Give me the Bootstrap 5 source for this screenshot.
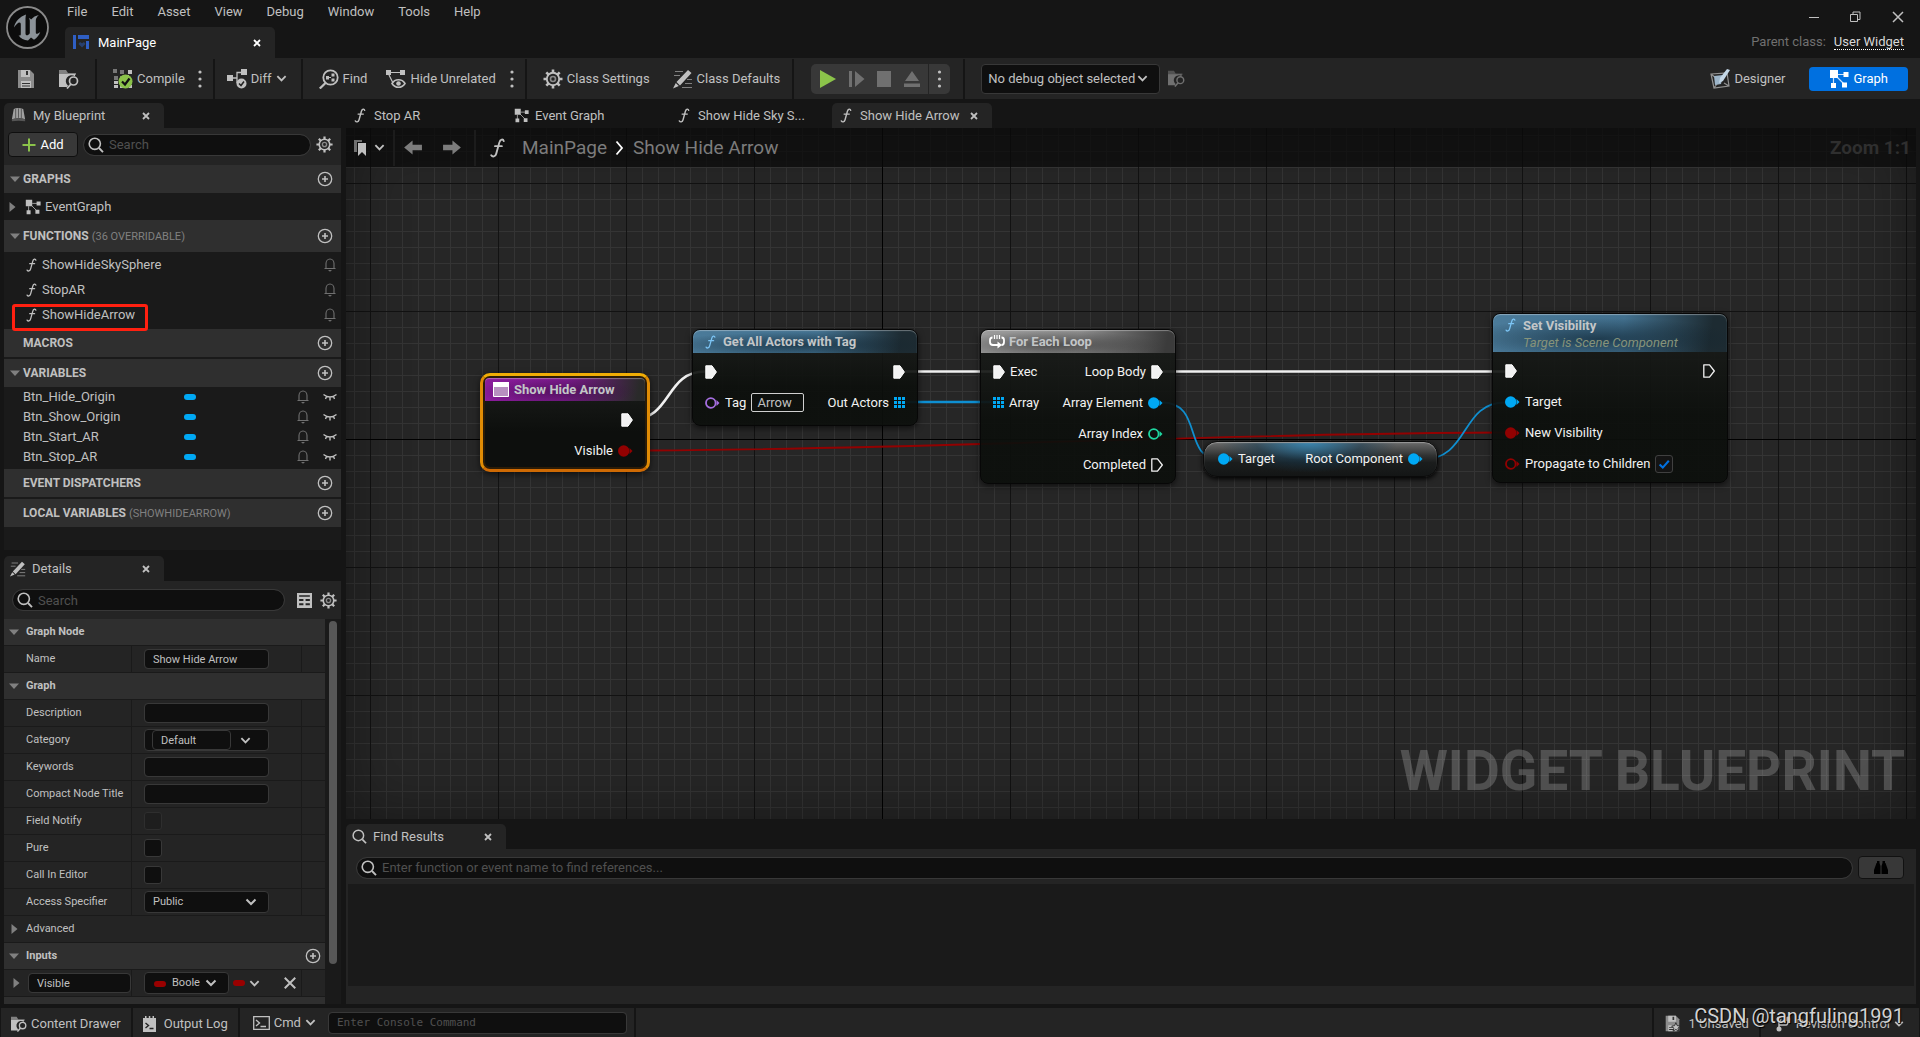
<!DOCTYPE html>
<html lang="en">
<head>
<meta charset="utf-8">
<meta name="viewport" content="width=device-width, initial-scale=1">
<title>MainPage</title>
<link href="https://cdn.jsdelivr.net/npm/bootstrap@5.3.0/dist/css/bootstrap.min.css" rel="stylesheet">
<style>
:root{--ink:#c0c0c0;--panel:#242424;--deep:#151515;--head:#2f2f2f;--list:#1a1a1a;--field:#0f0f0f;--line:#383838}
body{background:var(--deep);color:var(--ink);font:13px/16px Roboto,"Liberation Sans",sans-serif;overflow:hidden}
svg{display:block;flex:none;fill:currentColor}
.ln{fill:none;stroke:currentColor}
a{color:inherit;text-decoration:none}
.ui-btn{background:none;border:0;padding:0;color:inherit;font-size:13px;line-height:16px;display:flex;align-items:center;gap:4px;white-space:nowrap;border-radius:4px}
.dim{color:#707070}
.green{color:#8bc34a}
.blue{color:#2f5fc4}
.pin-obj{color:#00a8f4}
.pin-bool{color:#920101}
.pin-name{color:#a56ee0}
.pin-int{color:#1fd6a0}
.fn-blue{color:#7cc4f4}
.logo-box{width:65px;padding:6px}
.menu-row{height:23px;gap:24px;padding-left:2px}
.app-tab{width:210px;height:31px;background:var(--panel);border-radius:5px 5px 0 0;padding:0 14px 0 8px;color:#fff;gap:8px}
.win-row{height:34px;gap:31px}
.dotted{color:#d8d8d8;border-bottom:1px dotted #fff;line-height:15px}
.tool-row{background:var(--panel);height:42px}
.tool-group{border-right:2px solid var(--deep);height:40px;display:flex;align-items:center}
.play-group{background:#383838;border-radius:5px;height:30px}
.play-more{border-left:1px solid #242424!important;border-radius:0}
.field{background-color:var(--field);border:1px solid var(--line);border-radius:4px;color:var(--ink);font-size:13px;line-height:16px;padding:0 8px}
.field::placeholder{color:#505050;opacity:1}
.field:focus{background-color:var(--field);color:#fff;border-color:#0070e0;box-shadow:none}
.form-select.field{background-image:url("data:image/svg+xml,%3Csvg xmlns='http://www.w3.org/2000/svg' viewBox='0 0 12 12'%3E%3Cpath fill='none' stroke='%23c0c0c0' stroke-width='2' d='M1.500 3.500 6 8l4.500-4.500'/%3E%3C/svg%3E");background-size:12px;background-position:right 11px center;background-repeat:no-repeat}
.form-select.debug-pick{width:179px;height:30px;padding:0 22px 0 6px;background-size:11px}
.mode-btn{height:24px;padding:0 20px;border-radius:4px}
.mode-on{background:#0070e0;color:#fff}
.side{width:337px}
.dock-tab{width:160px;height:25px;border-radius:5px 5px 0 0;padding:0 14px 0 6px;gap:6px}
.dock-on{background:var(--panel)}
.fn-tab{padding-left:8px;gap:8px}
.pill{position:relative}
.pill svg{position:absolute;left:5px;top:3px}
.pill .field{height:22px;border-radius:11px;padding-left:25px}
.add-btn{background:#383838;border:1px solid #0f0f0f;width:70px;height:25px;justify-content:center;color:#fff}
.bp-tools{height:37px;padding:0 8px 4px 4px;gap:5px}
.dt-tools{height:38px;padding:0 4px 0 8px;gap:8px}
.sec{height:28px;background:var(--head);padding:0 8px 0 6px;gap:3px;font-size:12px;font-weight:700}
.sec small{font-size:11px;font-weight:400;color:#808080}
.sec-tall{height:32px}
.sec-gap{margin-top:2px}
.twist{width:10px}
.bp{background:var(--list);padding-bottom:23px}
.ev-row{height:27px;padding-left:3px}
.fn-row{height:25px;padding:0 5px 0 22px;gap:5px}
.var-row{height:20px;padding:0 4px 0 19px;gap:14px}
.capsule{width:12px;height:6px;border-radius:3px;background:#00a8f4}
.var-name{width:147px}
.mark-box{left:8px;top:2px;width:136px;height:27px;border:3px solid #ff2010;border-radius:3px;z-index:2}
.prop{height:27px;border-bottom:1px solid var(--list);font-size:11px;line-height:14px;background:var(--panel)}
.prop-head{background:var(--head);font-weight:700;padding:0 4px 0 5px;gap:7px}
.prop-name{width:128px;padding-left:22px;border-right:1px solid var(--list);align-self:stretch;display:flex;align-items:center;margin:0;white-space:nowrap}
.prop-val{flex:1;padding-left:12px;border-right:1px solid var(--list);align-self:stretch;display:flex;align-items:center}
.prop-end{width:23px}
.prop .field{width:125px;height:20px;font-size:11px;line-height:14px;min-height:0}
.prop .combo{width:79px}
.prop select.field{height:22px}
.prop .boole{width:85px;height:24px;padding-left:27px;padding-right:28px}
.prop .in-name{width:103px}
.combo-wrap{width:125px;height:22px;background:var(--field);border:1px solid var(--line);border-radius:4px;padding:0 17px 0 7px}
.tick{width:18px;height:18px;margin:0!important;background-color:var(--field);border:1px solid var(--line);border-radius:3px!important}
.tick:disabled{background-color:var(--list)}
.tick:checked{background-color:#141414;border-color:#404040;background-image:url("data:image/svg+xml,%3Csvg xmlns='http://www.w3.org/2000/svg' viewBox='0 0 20 20'%3E%3Cpath fill='none' stroke='%230070e0' stroke-width='2.600' d='m4.500 10.500 4 4 7.500-8.500'/%3E%3C/svg%3E")}
.red-pill{width:12px;height:6px;border-radius:3px;background:#990000}
.on-select{left:10px;top:9px}
.bar-track{width:16px;background:var(--list);padding:2px 4px}
.bar-thumb{width:8px;height:343px;border-radius:4px;background:#575757}
.canvas{background-color:#262626;
 background-image:
 linear-gradient(#000,#000),linear-gradient(#000,#000),
 linear-gradient(90deg,#121212 1px,transparent 1px),linear-gradient(#121212 1px,transparent 1px),
 linear-gradient(90deg,#343434 1px,transparent 1px),linear-gradient(#343434 1px,transparent 1px);
 background-size:1px 100%,100% 1px,128px 128px,128px 128px,16px 16px,16px 16px;
 background-position:536px 0,0 311px,24px 0,0 55px,8px 0,0 7px;
 background-repeat:no-repeat,no-repeat,repeat,repeat,repeat,repeat}
.canvas::before{content:"";position:absolute;inset:0;box-shadow:inset 0 0 60px rgba(0,0,0,.42)}
.crumbs{height:39px;background:rgba(10,10,10,.72);font-size:19px;line-height:24px;color:#7c7c7c;padding-left:8px}
.crumb-sep{width:2px;height:36px;background:#1c1c1c}
.zoom-tag{color:#2f2f2f;font-weight:700;padding-right:5px}
.stamp{right:11px;bottom:16px;font-size:55px;line-height:64px;font-weight:700;color:rgba(255,255,255,.2)}
.node{position:absolute;border:1px solid #070707;border-radius:8px;background:linear-gradient(rgba(28,30,28,.92),rgba(12,15,12,.93) 60%);box-shadow:0 2px 6px rgba(0,0,0,.6);color:#f2f2f2;padding-bottom:3px}
.node-head{height:23px;border-radius:7px 7px 0 0;font-weight:700;color:#c3c6c8;padding:0 12px;gap:7px;margin-bottom:3px;box-shadow:inset 0 1px 1px rgba(255,255,255,.35)}
.node-head.tight{padding-left:8px;gap:4px}
.node-row{height:31px;padding:0 12px;gap:5px}
.head-blue{background:radial-gradient(ellipse 60% 55% at 45% 65%,rgba(12,32,45,.65),transparent),linear-gradient(100deg,#4b7b9a,#42708e 55%,#1d2b32 92%)}
.head-gray{background:radial-gradient(ellipse 55% 60% at 38% 65%,rgba(50,50,50,.7),transparent),linear-gradient(100deg,#9a9a9a,#8d8d8d 50%,#3b3b3b 95%)}
.head-purple{background:radial-gradient(ellipse 50% 60% at 45% 60%,rgba(60,10,70,.6),transparent),linear-gradient(100deg,#8a1c9c,#7b1b8c 50%,#2a2a2a 95%);border-radius:4px 4px 0 0}
.head-two{height:38px;padding-top:4px}
.head-two em{font-weight:400;color:#86937a;display:block;line-height:17px}
.n-entry{left:134px;top:245px;width:170px;border:3px solid;border-color:#f0ad05 #e08c05 #cf6a04;border-radius:10px;padding:2px;background:#2c1c06}
.n-entry .node-body{background:linear-gradient(#1c1e1c,#0d0f0d 60%);border-radius:5px;padding-bottom:1px}
.n-tag{left:346px;top:201px;width:226px}
.n-loop{left:634px;top:201px;width:196px}
.n-root{left:857px;top:313px;width:235px;height:36px;border-radius:14px;border-color:#0a0a0a;padding:0 2px;box-shadow:inset 0 1px 1px #9a9a9a,0 2px 5px #000;background:radial-gradient(ellipse 38% 90% at 45% 0,rgba(50,140,190,.85),rgba(20,60,85,.5) 60%,transparent),linear-gradient(#6c6c6c,#303232 40%,#1b1d1d 60%,#141616)}
.n-set{left:1146px;top:185px;width:236px}
.tag-in{background:transparent;border:1px solid #d0d0d0;border-radius:2px;color:var(--ink);width:53px;height:19px;padding:0 5px;font-size:13px;line-height:16px}
.find-box{background:var(--panel);padding:7px 2px 18px}
.find-list{background:var(--list);height:102px;margin-top:5px}
.bino{width:46px;height:23px;background:#383838;border:1px solid #111;justify-content:center;color:#000}
.status{margin-top:4px;height:29px;gap:2px;padding:0 1px}
.status>.cell{background:var(--panel);display:flex;align-items:center;padding:2px 10px 0}
.mono{font-family:"DejaVu Sans Mono","Liberation Mono",monospace;font-size:11px;width:299px;height:22px}
.csdn{right:16px;bottom:9px;font-size:20px;line-height:24px;color:#d2d2d2;text-shadow:1px 1px 1px #000;z-index:5}
</style>
<script src="https://cdn.jsdelivr.net/npm/bootstrap@5.3.0/dist/js/bootstrap.bundle.min.js"></script>
</head>
<body class="d-flex flex-column vh-100">

<svg width="0" height="0" class="position-absolute" aria-hidden="true">
<defs>
<symbol id="i-x" viewBox="0 0 8 8"><path class="ln" stroke-width="1.800" d="M1 1l6 6M7 1l-6 6"/></symbol>
<symbol id="i-chev" viewBox="0 0 12 12"><path class="ln" stroke-width="2" d="M1.500 3.500 6 8l4.500-4.500"/></symbol>
<symbol id="i-dots" viewBox="0 0 4 18"><circle cx="2" cy="2" r="1.600"/><circle cx="2" cy="9" r="1.600"/><circle cx="2" cy="16" r="1.600"/></symbol>
<symbol id="i-save" viewBox="0 0 20 20"><path fill="#8c8c8c" d="M2 1h12l4 4v14H2z"/><path d="M5 1h9v7H5zM5 12h10v7H5z"/><path fill="#333" d="M10 2h2v4h-2zM6 14h8v1H6zM6 16.500h8v1H6z"/></symbol>
<symbol id="i-folder" viewBox="0 0 20 20"><path opacity=".6" d="M0 1h7l2 3h8v2H0z"/><path d="M0 5h16v2.500a5.500 5.500 0 0 0-7 9L8 18H0z"/><circle class="ln" cx="14.500" cy="12" r="4" stroke-width="1.700"/><path class="ln" stroke-width="1.800" d="M12 15l-4 4.500"/></symbol>
<symbol id="i-compile" viewBox="0 0 20 20"><path fill="#777" d="M0 0h4v4H0zM7 1h4v4H7zM1 7h4v4H1zM7 7h4v4H7z"/><path d="M15 1h4v4h-4zM1 12h4v3H1zM1 16h4v3H1zM16 16h3v3h-3zM13 6h3v3h-3zM7 16h3v3H7z"/><circle cx="12.500" cy="12.500" r="7" fill="#8bc34a"/><path fill="none" stroke="#111" stroke-width="2.200" d="M9 12.500l3 3 4.500-6"/></symbol>
<symbol id="i-diff" viewBox="0 0 20 20"><path d="M0 6h6v6H0zM14 0h6v6h-6z"/><path class="ln" stroke-width="1.300" d="M6 9h4V3.500h4M10 9v5"/><circle cx="14.500" cy="14.500" r="5"/><path fill="none" stroke="#222" stroke-width="1.500" d="M12 14.500l2 2 3-4"/></symbol>
<symbol id="i-find" viewBox="0 0 20 20"><circle class="ln" cx="11.500" cy="8.500" r="7.200" stroke-width="1.800"/><path class="ln" stroke-width="2.300" d="M6.500 14 .8 19.500"/><path d="M7 7h3v3.500H7zM12.500 4.500h3v3h-3zM12.500 9.500h3v3h-3z"/><path class="ln" d="M10 8.500h2"/></symbol>
<symbol id="i-hide" viewBox="0 0 20 20"><path d="M0 1h5v5H0zM14 1h5v5h-5z"/><path class="ln" stroke-width="1.200" d="M5 3.500h9M3 6l4 8"/><path class="ln" stroke-width="1.600" d="M6 14.500c3-5 10-5 13 0-3 5-10 5-13 0z"/><circle cx="12.500" cy="14.500" r="2.300"/></symbol>
<symbol id="i-gear" viewBox="0 0 20 20"><circle class="ln" cx="10" cy="10" r="6.200" stroke-width="1.900"/><circle class="ln" cx="10" cy="10" r="2.500" stroke-width="1.600" opacity=".65"/><path class="ln" stroke-width="2.600" d="M10 .5v3.300M10 16.200v3.300M.5 10h3.300M16.200 10h3.300M3.300 3.300l2.300 2.300M14.400 14.400l2.300 2.300M3.300 16.700l2.300-2.300M14.400 5.600l2.300-2.300"/></symbol>
<symbol id="i-pencil" viewBox="0 0 20 20"><path class="ln" stroke-width="1.200" opacity=".6" d="M2 2.500h8M1 6.500h6M14 10.500h5M12 14.500h7M9 18.500h10"/><path d="M15 1l3.500 3L7 16.500 3.500 13zM2.800 14l3 3L0 19.500z"/></symbol>
<symbol id="i-graph" viewBox="0 0 20 20"><path d="M1 1h8v8H1zM14.500 3h5v5h-5zM2 14h5v5H2zM13 13.500h5v5h-5z"/><path class="ln" stroke-width="1.200" opacity=".8" d="M9 5.500h6M4.500 9v6M8 8l6.500 6.500"/></symbol>
<symbol id="i-design" viewBox="0 0 20 20"><path class="ln" stroke-width="1.200" opacity=".7" d="M1 5l16-1 2 13-15 2zM1 5l5 4M19 17l-5-3M4 19l3-4"/><path fill="#9cb4c8" d="M4 7l9-1-2 9-6 1z"/><path fill="#c4d8e8" d="M17 0l3 1-7 11-4 2 1-5z"/></symbol>
<symbol id="i-fn" viewBox="0 0 12 16"><path class="ln" stroke-width="1.500" stroke-linecap="round" d="M11 2.500C10.500.6 8.200.8 7.500 3.500L5 12.500C4.300 15.200 2 15.400 1 13.800M4 6.500h5.500"/></symbol>
<symbol id="i-mag" viewBox="0 0 16 16"><circle class="ln" cx="6.800" cy="6.800" r="5.600" stroke-width="1.600"/><path class="ln" stroke-width="1.900" d="M11 11l4 4.200"/></symbol>
<symbol id="i-plus" viewBox="0 0 16 16"><circle class="ln" cx="8" cy="8" r="6.700" stroke-width="1.300"/><path class="ln" stroke-width="1.600" d="M8 5v6M5 8h6"/></symbol>
<symbol id="i-down" viewBox="0 0 10 10"><path fill="#808080" d="M0 2.500h10L5 8z"/></symbol>
<symbol id="i-right" viewBox="0 0 10 10"><path fill="#808080" d="M2.500 0v10L8.500 5z"/></symbol>
<symbol id="i-bell" viewBox="0 0 12 14"><path class="ln" stroke-width="1.100" d="M.5 10.500h11M2 10.500V5.500a4 4.500 0 0 1 8 0v5"/><path d="M4 12h4l-2 1.800z"/></symbol>
<symbol id="i-lash" viewBox="0 0 14 8"><path class="ln" stroke-width="1.400" d="M.5 1.500q6.500 5 13 0M3.500 3.500l-1 2.500M7 4.500V7.500M10.500 3.500l1 2.500"/></symbol>
<symbol id="i-book" viewBox="0 0 18 18"><path fill="#a0a0a0" d="M4 2q4-2 10 0l2 11q-6-2-14 0z"/><path fill="none" stroke="#555" d="M6 2v10M9 1.500v10M12 2v10"/><path fill="#555" d="M2 13q7-2 14 0v2q-7-1-14 0z"/></symbol>
<symbol id="i-table" viewBox="0 0 14 14"><path d="M0 0h14v14H0z"/><path fill="#242424" d="M2 2h10v1.500H2zM2 5.500h4v2H2zM8 5.500h4v2H8zM2 9.500h4v2H2zM8 9.500h4v2H8z"/></symbol>
<symbol id="i-exec" viewBox="0 0 12 14"><path stroke="#fff" stroke-width="1" stroke-linejoin="round" d="M.8.800H7L11.400 7 7 13.200H.8z"/></symbol>
<symbol id="i-exec0" viewBox="0 0 12 14"><path class="ln" stroke-width="1.300" stroke-linejoin="round" d="M.8.800H6.500L11.300 7 6.500 13.200H.8z"/></symbol>
<symbol id="i-pin" viewBox="0 0 15 12"><circle cx="5.700" cy="6" r="5.700"/><path d="M11.500 3l3 3-3 3z"/></symbol>
<symbol id="i-pin0" viewBox="0 0 15 12"><circle class="ln" cx="5.800" cy="6" r="4.800" stroke-width="1.800"/><path d="M11.500 3l3 3-3 3z"/></symbol>
<symbol id="i-arr" viewBox="0 0 11 11"><path d="M0 0h3v3H0zM4 0h3v3H4zM8 0h3v3H8zM0 4h3v3H0zM4 4h3v3H4zM8 4h3v3H8zM0 8h3v3H0zM4 8h3v3H4zM8 8h3v3H8z"/></symbol>
<symbol id="i-back" viewBox="0 0 20 16"><path d="M0 8l9-7.500V5h10v6H9v4.500z"/></symbol>
</defs>
</svg>

<header class="d-flex">
  <div class="logo-box">
    <svg width="43" height="43" viewBox="0 0 43 43" role="img" aria-label="Unreal"><circle cx="21.500" cy="21.500" r="20.500" fill="#0c0c0c" stroke="#8a8a8a" stroke-width="1.800"/><path fill="#8b9298" d="M20 8.500c-6 2-11 7-12 13 2-3 4-5 5.500-5 1 0 1.300.7 1.300 2v9.500c0 1.500-.9 1.700-2.300 1.300C14.700 32.500 18 34.500 22 34.500l3-3 3 2.200c3-1.800 5.200-4.700 6.300-8-1.400 1.300-2.600 2.100-3.500 2.100-.7 0-1-.5-1-1.500V14.500c0-2 1.200-3.800 3-5.500-3 .7-5.700 2.100-7.700 4.500-.5-.8-1.300-1.200-2.300-1.200.8.900 1 1.700 1 2.800v12.200c-1 1.400-2 2-2.800 2-1 0-1.500-.6-1.500-2V12.500c0-1.700.3-3 .5-4z"/></svg>
  </div>
  <div class="flex-grow-1">
    <nav class="menu-row d-flex align-items-center"><a href="#">File</a><a href="#">Edit</a><a href="#">Asset</a><a href="#">View</a><a href="#">Debug</a><a href="#">Window</a><a href="#">Tools</a><a href="#">Help</a></nav>
    <div class="app-tab d-flex align-items-center mt-1">
      <svg class="blue" width="17" height="15" viewBox="0 0 17 15"><path d="M0 0h3v14H0zM5 0h11v4H5zM13 6h3v8h-3z"/><path fill="#28406f" d="M9 12.500L5.500 9l1.500-2 2 1.200L11 7l1.500 2z"/></svg>
      <span class="flex-grow-1">MainPage</span>
      <button class="ui-btn" aria-label="Close MainPage"><svg width="8" height="8"><use href="#i-x"/></svg></button>
    </div>
  </div>
  <div class="pe-3">
    <div class="win-row d-flex align-items-center justify-content-end">
      <button class="ui-btn" aria-label="Minimize"><svg width="10" height="12" viewBox="0 0 10 12"><path d="M0 6h10v1H0z"/></svg></button>
      <button class="ui-btn" aria-label="Restore"><svg width="11" height="12" viewBox="0 0 11 12"><path class="ln" d="M.5 3.500h7v7h-7zM3 3V1h7v7.500H8"/></svg></button>
      <button class="ui-btn" aria-label="Close"><svg width="12" height="12" viewBox="0 0 12 12"><path class="ln" stroke-width="1.500" d="M1 1l10 10M11 1L1 11"/></svg></button>
    </div>
    <div class="d-flex align-items-center gap-2"><span class="dim">Parent class:</span><a href="#" class="dotted">User Widget</a></div>
  </div>
</header>

<div class="tool-row d-flex align-items-center">
  <div class="tool-group px-3" style="gap:23px">
    <button class="ui-btn" aria-label="Save"><svg width="20" height="20"><use href="#i-save"/></svg></button>
    <button class="ui-btn" aria-label="Browse"><svg width="20" height="20"><use href="#i-folder"/></svg></button>
  </div>
  <div class="tool-group ps-3" style="gap:13px;padding-right:11px">
    <button class="ui-btn"><svg width="20" height="20"><use href="#i-compile"/></svg>Compile</button>
    <button class="ui-btn" aria-label="Compile options"><svg width="4" height="18"><use href="#i-dots"/></svg></button>
  </div>
  <div class="tool-group" style="padding:0 14px 0 12px">
    <button class="ui-btn"><svg width="20" height="20"><use href="#i-diff"/></svg>Diff<svg width="11" height="11"><use href="#i-chev"/></svg></button>
  </div>
  <div class="tool-group ps-3" style="gap:19px;padding-right:11px">
    <button class="ui-btn"><svg width="20" height="20"><use href="#i-find"/></svg>Find</button>
    <div class="d-flex align-items-center" style="gap:14px">
      <button class="ui-btn"><svg width="20" height="20"><use href="#i-hide"/></svg>Hide Unrelated</button>
      <button class="ui-btn" aria-label="Hide options"><svg width="4" height="18"><use href="#i-dots"/></svg></button>
    </div>
  </div>
  <div class="tool-group ps-3" style="gap:23px;padding-right:12px">
    <button class="ui-btn"><svg width="20" height="20"><use href="#i-gear"/></svg>Class Settings</button>
    <button class="ui-btn"><svg width="20" height="20"><use href="#i-pencil"/></svg>Class Defaults</button>
  </div>
  <div class="tool-group" style="padding:0 13px 0 17px">
    <div class="play-group d-flex align-items-center">
      <div class="d-flex align-items-center px-2" style="gap:12px">
        <button class="ui-btn green" aria-label="Play"><svg width="18" height="18" viewBox="0 0 18 18"><path d="M1 0l16 9L1 18z"/></svg></button>
        <button class="ui-btn dim" aria-label="Step"><svg width="16" height="16" viewBox="0 0 16 16"><path d="M0 0h3v16H0zM6 0l9.500 8L6 16z"/></svg></button>
        <button class="ui-btn dim" aria-label="Stop"><svg width="15" height="16" viewBox="0 0 15 16"><path d="M0 0h14v16H0z"/></svg></button>
        <button class="ui-btn dim" aria-label="Eject"><svg width="16" height="16" viewBox="0 0 16 16"><path d="M8 0l7 10H1zM0 12.500h16V16H0z"/></svg></button>
      </div>
      <button class="ui-btn px-2 h-100 play-more" aria-label="Play options"><svg width="5" height="18"><use href="#i-dots"/></svg></button>
    </div>
  </div>
  <div class="d-flex align-items-center ps-3 gap-2">
    <select class="form-select field debug-pick" aria-label="Debug object"><option>No debug object selected</option></select>
    <button class="ui-btn dim" aria-label="Browse debug object"><svg width="17" height="17"><use href="#i-folder"/></svg></button>
  </div>
  <div class="ms-auto d-flex align-items-center pe-2 me-1">
    <button class="ui-btn mode-btn me-1"><svg width="20" height="20"><use href="#i-design"/></svg>Designer</button>
    <button class="ui-btn mode-btn mode-on"><svg width="20" height="20"><use href="#i-graph"/></svg>Graph</button>
  </div>
</div>

<main class="d-flex flex-grow-1 px-1" style="gap:5px;min-height:0">
  <aside class="side d-flex flex-column flex-shrink-0">
    <div class="dock-tab dock-on d-flex align-items-center mt-1 flex-shrink-0">
      <svg width="17" height="17"><use href="#i-book"/></svg><span class="flex-grow-1">My Blueprint</span>
      <button class="ui-btn" aria-label="Close My Blueprint"><svg width="8" height="8"><use href="#i-x"/></svg></button>
    </div>
    <div class="dock-on bp-tools d-flex align-items-center flex-shrink-0">
      <button class="ui-btn add-btn"><svg class="green" width="14" height="14" viewBox="0 0 14 14"><path class="ln" stroke-width="2" d="M7 .5v13M.5 7h13"/></svg>Add</button>
      <div class="pill flex-grow-1"><input class="form-control field" type="text" placeholder="Search" aria-label="Search blueprint"><svg width="16" height="16"><use href="#i-mag"/></svg></div>
      <button class="ui-btn" aria-label="Blueprint settings"><svg width="17" height="17"><use href="#i-gear"/></svg></button>
    </div>
    <div class="bp flex-shrink-0">
      <div class="sec d-flex align-items-center"><svg class="twist" width="10" height="10"><use href="#i-down"/></svg><span class="flex-grow-1">GRAPHS</span><button class="ui-btn" aria-label="Add graph"><svg width="16" height="16"><use href="#i-plus"/></svg></button></div>
      <div class="ev-row d-flex align-items-center gap-1"><svg class="me-1" width="10" height="10"><use href="#i-right"/></svg><svg width="16" height="16"><use href="#i-graph"/></svg>EventGraph</div>
      <div class="sec sec-tall d-flex align-items-center"><svg class="twist" width="10" height="10"><use href="#i-down"/></svg><span class="flex-grow-1">FUNCTIONS <small>(36 OVERRIDABLE)</small></span><button class="ui-btn" aria-label="Add function"><svg width="16" height="16"><use href="#i-plus"/></svg></button></div>
      <div class="fn-row d-flex align-items-center"><svg width="11" height="14"><use href="#i-fn"/></svg><span class="flex-grow-1">ShowHideSkySphere</span><svg class="dim" width="12" height="14"><use href="#i-bell"/></svg></div>
      <div class="fn-row d-flex align-items-center"><svg width="11" height="14"><use href="#i-fn"/></svg><span class="flex-grow-1">StopAR</span><svg class="dim" width="12" height="14"><use href="#i-bell"/></svg></div>
      <div class="fn-row d-flex align-items-center position-relative"><svg width="11" height="14"><use href="#i-fn"/></svg><span class="flex-grow-1">ShowHideArrow</span><svg class="dim" width="12" height="14"><use href="#i-bell"/></svg><span class="mark-box position-absolute"></span></div>
      <div class="sec sec-gap d-flex align-items-center"><span class="twist"></span><span class="flex-grow-1">MACROS</span><button class="ui-btn" aria-label="Add macro"><svg width="16" height="16"><use href="#i-plus"/></svg></button></div>
      <div class="sec sec-gap d-flex align-items-center"><svg class="twist" width="10" height="10"><use href="#i-down"/></svg><span class="flex-grow-1">VARIABLES</span><button class="ui-btn" aria-label="Add variable"><svg width="16" height="16"><use href="#i-plus"/></svg></button></div>
      <div class="var-row d-flex align-items-center"><span class="var-name">Btn_Hide_Origin</span><span class="capsule"></span><svg class="dim ms-auto" width="12" height="14"><use href="#i-bell"/></svg><svg width="14" height="8"><use href="#i-lash"/></svg></div>
      <div class="var-row d-flex align-items-center"><span class="var-name">Btn_Show_Origin</span><span class="capsule"></span><svg class="dim ms-auto" width="12" height="14"><use href="#i-bell"/></svg><svg width="14" height="8"><use href="#i-lash"/></svg></div>
      <div class="var-row d-flex align-items-center"><span class="var-name">Btn_Start_AR</span><span class="capsule"></span><svg class="dim ms-auto" width="12" height="14"><use href="#i-bell"/></svg><svg width="14" height="8"><use href="#i-lash"/></svg></div>
      <div class="var-row d-flex align-items-center"><span class="var-name">Btn_Stop_AR</span><span class="capsule"></span><svg class="dim ms-auto" width="12" height="14"><use href="#i-bell"/></svg><svg width="14" height="8"><use href="#i-lash"/></svg></div>
      <div class="sec sec-gap d-flex align-items-center"><span class="twist"></span><span class="flex-grow-1">EVENT DISPATCHERS</span><button class="ui-btn" aria-label="Add dispatcher"><svg width="16" height="16"><use href="#i-plus"/></svg></button></div>
      <div class="sec sec-gap d-flex align-items-center"><span class="twist"></span><span class="flex-grow-1">LOCAL VARIABLES <small>(SHOWHIDEARROW)</small></span><button class="ui-btn" aria-label="Add local variable"><svg width="16" height="16"><use href="#i-plus"/></svg></button></div>
    </div>

    <div class="dock-tab dock-on d-flex align-items-center flex-shrink-0" style="margin-top:6px">
      <svg width="16" height="16"><use href="#i-pencil"/></svg><span class="flex-grow-1">Details</span>
      <button class="ui-btn" aria-label="Close Details"><svg width="8" height="8"><use href="#i-x"/></svg></button>
    </div>
    <div class="dock-on dt-tools d-flex align-items-center flex-shrink-0">
      <div class="pill flex-grow-1 me-1"><input class="form-control field" type="text" placeholder="Search" aria-label="Search details"><svg width="16" height="16"><use href="#i-mag"/></svg></div>
      <button class="ui-btn" aria-label="Table view"><svg width="15" height="15"><use href="#i-table"/></svg></button>
      <button class="ui-btn" aria-label="Details settings"><svg width="17" height="17"><use href="#i-gear"/></svg></button>
    </div>
    <div class="d-flex flex-grow-1 overflow-hidden" style="min-height:0">
      <div class="flex-grow-1">
        <div class="prop prop-head d-flex align-items-center"><svg width="10" height="10"><use href="#i-down"/></svg>Graph Node</div>
        <div class="prop d-flex"><label class="prop-name" for="p1">Name</label><div class="prop-val"><input id="p1" class="form-control field" value="Show Hide Arrow"></div><div class="prop-end"></div></div>
        <div class="prop prop-head d-flex align-items-center"><svg width="10" height="10"><use href="#i-down"/></svg>Graph</div>
        <div class="prop d-flex"><label class="prop-name" for="p2">Description</label><div class="prop-val"><input id="p2" class="form-control field"></div><div class="prop-end"></div></div>
        <div class="prop d-flex"><label class="prop-name" for="p3">Category</label><div class="prop-val"><div class="combo-wrap d-flex align-items-center justify-content-between"><input id="p3" class="form-control field combo" value="Default"><button class="ui-btn" aria-label="Pick category"><svg width="11" height="11"><use href="#i-chev"/></svg></button></div></div><div class="prop-end"></div></div>
        <div class="prop d-flex"><label class="prop-name" for="p4">Keywords</label><div class="prop-val"><input id="p4" class="form-control field"></div><div class="prop-end"></div></div>
        <div class="prop d-flex"><label class="prop-name" for="p5">Compact Node Title</label><div class="prop-val"><input id="p5" class="form-control field"></div><div class="prop-end"></div></div>
        <div class="prop d-flex"><label class="prop-name" for="p6">Field Notify</label><div class="prop-val"><input id="p6" type="checkbox" class="form-check-input tick" disabled></div><div class="prop-end"></div></div>
        <div class="prop d-flex"><label class="prop-name" for="p7">Pure</label><div class="prop-val"><input id="p7" type="checkbox" class="form-check-input tick"></div><div class="prop-end"></div></div>
        <div class="prop d-flex"><label class="prop-name" for="p8">Call In Editor</label><div class="prop-val"><input id="p8" type="checkbox" class="form-check-input tick"></div><div class="prop-end"></div></div>
        <div class="prop d-flex"><label class="prop-name" for="p9">Access Specifier</label><div class="prop-val"><select id="p9" class="form-select field"><option>Public</option></select></div><div class="prop-end"></div></div>
        <div class="prop d-flex align-items-center" style="padding-left:5px;gap:7px"><svg width="10" height="10"><use href="#i-right"/></svg>Advanced</div>
        <div class="prop prop-head d-flex align-items-center"><svg width="10" height="10"><use href="#i-down"/></svg><span class="flex-grow-1">Inputs</span><button class="ui-btn" aria-label="Add input"><svg width="16" height="16"><use href="#i-plus"/></svg></button></div>
        <div class="prop d-flex">
          <div class="prop-name" style="padding-left:7px;gap:7px"><svg width="10" height="10"><use href="#i-right"/></svg><input class="form-control field in-name" value="Visible" aria-label="Input name"></div>
          <div class="prop-val">
            <div class="position-relative"><select class="form-select field boole" aria-label="Input type"><option>Boolean</option></select><span class="red-pill on-select position-absolute"></span></div>
            <span class="red-pill ms-1"></span><button class="ui-btn ms-1" aria-label="Container type"><svg width="11" height="11"><use href="#i-chev"/></svg></button>
            <button class="ui-btn ms-4" aria-label="Remove input"><svg width="12" height="12" viewBox="0 0 8 8"><path class="ln" stroke-width="1.300" d="M.5.500l7 7M7.500.500l-7 7"/></svg></button>
          </div><div class="prop-end"></div></div>
        <div class="prop prop-head"></div>
      </div>
      <div class="bar-track"><div class="bar-thumb"></div></div>
    </div>
  </aside>

  <section class="d-flex flex-column flex-grow-1" style="min-width:0">
    <div class="d-flex mt-1" style="gap:2px">
      <div class="dock-tab fn-tab d-flex align-items-center"><svg width="12" height="15"><use href="#i-fn"/></svg>Stop AR</div>
      <div class="dock-tab d-flex align-items-center"><svg width="15" height="15"><use href="#i-graph"/></svg>Event Graph</div>
      <div class="dock-tab fn-tab d-flex align-items-center"><svg width="12" height="15"><use href="#i-fn"/></svg>Show Hide Sky S...</div>
      <div class="dock-tab fn-tab dock-on d-flex align-items-center"><svg width="12" height="15"><use href="#i-fn"/></svg><span class="flex-grow-1">Show Hide Arrow</span><button class="ui-btn" aria-label="Close tab"><svg width="8" height="8"><use href="#i-x"/></svg></button></div>
    </div>

    <div class="canvas flex-grow-1 position-relative overflow-hidden">
      <div class="crumbs d-flex align-items-center position-relative">
        <button class="ui-btn gap-2" aria-label="Bookmarks"><svg width="12" height="16" viewBox="0 0 12 16"><path fill="#707070" d="M0 0h8v2H3v10H0z"/><path fill="#c0c0c0" d="M4 3h8v13l-4-4-4 4z"/></svg><svg width="11" height="11" style="color:#c0c0c0"><use href="#i-chev"/></svg></button>
        <span class="crumb-sep ms-2"></span>
        <button class="ui-btn" aria-label="Back" style="margin-left:9px"><svg width="19" height="15"><use href="#i-back"/></svg></button>
        <button class="ui-btn" aria-label="Forward" style="margin-left:19px"><svg width="19" height="15" viewBox="0 0 20 16"><path d="M20 8L11 .5V5H1v6h10v4.500z"/></svg></button>
        <span class="crumb-sep" style="margin:0 14px 0 13px"></span>
        <svg width="15" height="20" style="color:#c0c0c0"><use href="#i-fn"/></svg>
        <a href="#" style="margin-left:17px">MainPage</a>
        <svg width="9" height="16" viewBox="0 0 9 16" style="color:#fff;margin:0 9px 0 8px"><path class="ln" stroke-width="1.800" d="M1.500 1.500L7 8l-5.500 6.500"/></svg>
        <span>Show Hide Arrow</span>
        <span class="zoom-tag ms-auto">Zoom 1:1</span>
      </div>
      <div class="stamp position-absolute">WIDGET BLUEPRINT</div>

      <svg class="position-absolute top-0 start-0" width="1570" height="691" viewBox="346 129 1570 691" aria-hidden="true">
        <g fill="none">
        <path stroke="#920101" stroke-width="1.800" d="M632 451.500C900 451.500 1240 433.500 1505 433.500"/>
        <path stroke="#f0f0f0" stroke-width="2.600" d="M632 420.500C672 420.500 665 372.500 705 372.500M905 372.500H993M1163 372.500H1505"/>
        <path stroke="#0e8fd2" stroke-width="2.600" d="M905 403H993"/>
        <path stroke="#108fd0" stroke-width="1.800" d="M1162 403.500C1204 403.500 1182 460.500 1220 460.500M1422 460.500C1470 460.500 1460 403.500 1505 403.500"/>
        </g>
      </svg>

      <div class="node n-entry"><div class="node-body">
        <div class="node-head head-purple tight d-flex align-items-center"><svg width="17" height="16" viewBox="0 0 17 16"><path fill="#b78fc0" stroke="#fff" d="M.5.500h15v14H.5z"/><path fill="#fff" d="M0 0h16v5H0z"/></svg>Show Hide Arrow</div>
        <div class="node-row d-flex align-items-center justify-content-end"><svg width="12" height="14"><use href="#i-exec"/></svg></div>
        <div class="node-row d-flex align-items-center justify-content-end">Visible<svg class="pin-bool" width="15" height="12"><use href="#i-pin"/></svg></div>
      </div></div>

      <div class="node n-tag">
        <div class="node-head head-blue d-flex align-items-center"><svg class="fn-blue" width="11" height="14"><use href="#i-fn"/></svg>Get All Actors with Tag</div>
        <div class="node-row d-flex align-items-center justify-content-between"><svg width="12" height="14"><use href="#i-exec"/></svg><svg width="12" height="14"><use href="#i-exec"/></svg></div>
        <div class="node-row d-flex align-items-center mb-1"><svg class="pin-name" width="15" height="12"><use href="#i-pin0"/></svg><label for="tg">Tag</label><input id="tg" class="tag-in" value="Arrow"><span class="ms-auto">Out Actors</span><svg class="pin-obj" width="11" height="11"><use href="#i-arr"/></svg></div>
      </div>

      <div class="node n-loop">
        <div class="node-head head-gray tight d-flex align-items-center"><svg width="16" height="16" viewBox="0 0 16 16" style="color:#fff"><path class="ln" stroke-width="1.800" d="M3.500 3.500Q1 3.500 1 6v2q0 3 3 3h5M12.500 3.500Q15 3.500 15 6v2q0 3-2.500 3"/><path class="ln" stroke-width="1.200" d="M5.500 1v4M8 1v4M10.500 1v4"/><path d="M8.500 7.500l4.500 3.500-4.500 3.500z"/></svg>For Each Loop</div>
        <div class="node-row d-flex align-items-center"><svg width="12" height="14"><use href="#i-exec"/></svg>Exec<span class="ms-auto">Loop Body</span><svg width="12" height="14"><use href="#i-exec"/></svg></div>
        <div class="node-row d-flex align-items-center"><svg class="pin-obj" width="11" height="11"><use href="#i-arr"/></svg>Array<span class="ms-auto">Array Element</span><svg class="pin-obj" width="15" height="12"><use href="#i-pin"/></svg></div>
        <div class="node-row d-flex align-items-center justify-content-end">Array Index<svg class="pin-int" width="15" height="12"><use href="#i-pin0"/></svg></div>
        <div class="node-row d-flex align-items-center justify-content-end">Completed<svg width="12" height="14"><use href="#i-exec0"/></svg></div>
      </div>

      <div class="node n-root d-flex align-items-center">
        <div class="node-row d-flex align-items-center w-100"><svg class="pin-obj" width="15" height="12"><use href="#i-pin"/></svg>Target<span class="ms-auto">Root Component</span><svg class="pin-obj" width="15" height="12"><use href="#i-pin"/></svg></div>
      </div>

      <div class="node n-set">
        <div class="node-head head-blue head-two d-flex"><svg class="fn-blue" width="11" height="14"><use href="#i-fn"/></svg><div>Set Visibility<em>Target is Scene Component</em></div></div>
        <div class="node-row d-flex align-items-center justify-content-between"><svg width="12" height="14"><use href="#i-exec"/></svg><svg width="12" height="14"><use href="#i-exec0"/></svg></div>
        <div class="node-row d-flex align-items-center"><svg class="pin-obj" width="15" height="12"><use href="#i-pin"/></svg>Target</div>
        <div class="node-row d-flex align-items-center"><svg class="pin-bool" width="15" height="12"><use href="#i-pin"/></svg>New Visibility</div>
        <div class="node-row d-flex align-items-center"><svg class="pin-bool" width="15" height="12"><use href="#i-pin0"/></svg><label for="prc">Propagate to Children</label><input id="prc" type="checkbox" class="form-check-input tick" checked></div>
      </div>
    </div>

    <div class="dock-tab dock-on d-flex align-items-center" style="margin-top:5px">
      <svg width="15" height="15"><use href="#i-mag"/></svg><span class="flex-grow-1">Find Results</span>
      <button class="ui-btn" aria-label="Close Find Results"><svg width="8" height="8"><use href="#i-x"/></svg></button>
    </div>
    <div class="find-box">
      <div class="d-flex align-items-center" style="gap:5px;padding:0 10px 0 8px">
        <div class="pill flex-grow-1"><input class="form-control field" type="text" placeholder="Enter function or event name to find references..." aria-label="Find references"><svg width="16" height="16"><use href="#i-mag"/></svg></div>
        <button class="ui-btn bino" aria-label="Find in blueprints"><svg width="14" height="14" viewBox="0 0 14 14"><path d="M3 0h2.500v2L6.500 5v8H0V9L2.500 2H3zM8.500 0H11v2h.5L14 9v4H7.500V5l1-3z"/></svg></button>
      </div>
      <div class="find-list"></div>
    </div>
  </section>
</main>

<footer class="status d-flex flex-shrink-0 position-relative">
  <div class="cell"><button class="ui-btn"><svg width="16" height="16"><use href="#i-folder"/></svg>Content Drawer</button></div>
  <div class="cell"><button class="ui-btn"><svg class="me-1" width="13" height="16" viewBox="0 0 13 16"><path d="M0 2h13v14H0zM2 0h1.500v2H2zM5.800 0h1.500v2H5.800zM9.500 0H11v2H9.500z"/><path fill="none" stroke="#222" stroke-width="1.400" d="M2.500 7l3 2.500-3 2.500M6.500 12.500h4"/></svg>Output Log</button></div>
  <div class="cell" style="padding:0 7px 0 13px;gap:12px"><button class="ui-btn"><svg width="17" height="14" viewBox="0 0 17 14"><path class="ln" stroke-width="1.300" d="M.7.700h15.600v12.600H.7z"/><path class="ln" stroke-width="1.400" d="M3 4l3.500 3L3 10M7.500 10.500H13"/></svg>Cmd<svg width="11" height="11"><use href="#i-chev"/></svg></button><input class="form-control field mono" placeholder="Enter Console Command" aria-label="Console command"></div>
  <div class="cell flex-grow-1"></div>
  <div class="cell"><button class="ui-btn"><svg class="me-1" width="17" height="17" viewBox="0 0 20 20"><use href="#i-save"/><path stroke="#242424" d="M14 9l1.500 3.500 3.500.5-2.500 2.500.8 3.500-3.300-2-3.300 2 .8-3.500L9 13l3.500-.5z"/></svg>1 Unsaved</button></div>
  <div class="cell" style="padding-left:15px;padding-right:15px"><button class="ui-btn"><svg width="16" height="16" viewBox="0 0 16 16"><circle cx="3" cy="3" r="2.500"/><circle cx="3" cy="13" r="2.500"/><circle cx="12" cy="3" r="2.500"/><path class="ln" stroke-width="1.500" d="M3 4v8M3 9h7q2 0 2-5"/></svg>Revision Control<svg width="10" height="10"><use href="#i-chev"/></svg></button></div>
  <div class="csdn position-absolute">CSDN @tangfuling1991</div>
</footer>
</body>
</html>
